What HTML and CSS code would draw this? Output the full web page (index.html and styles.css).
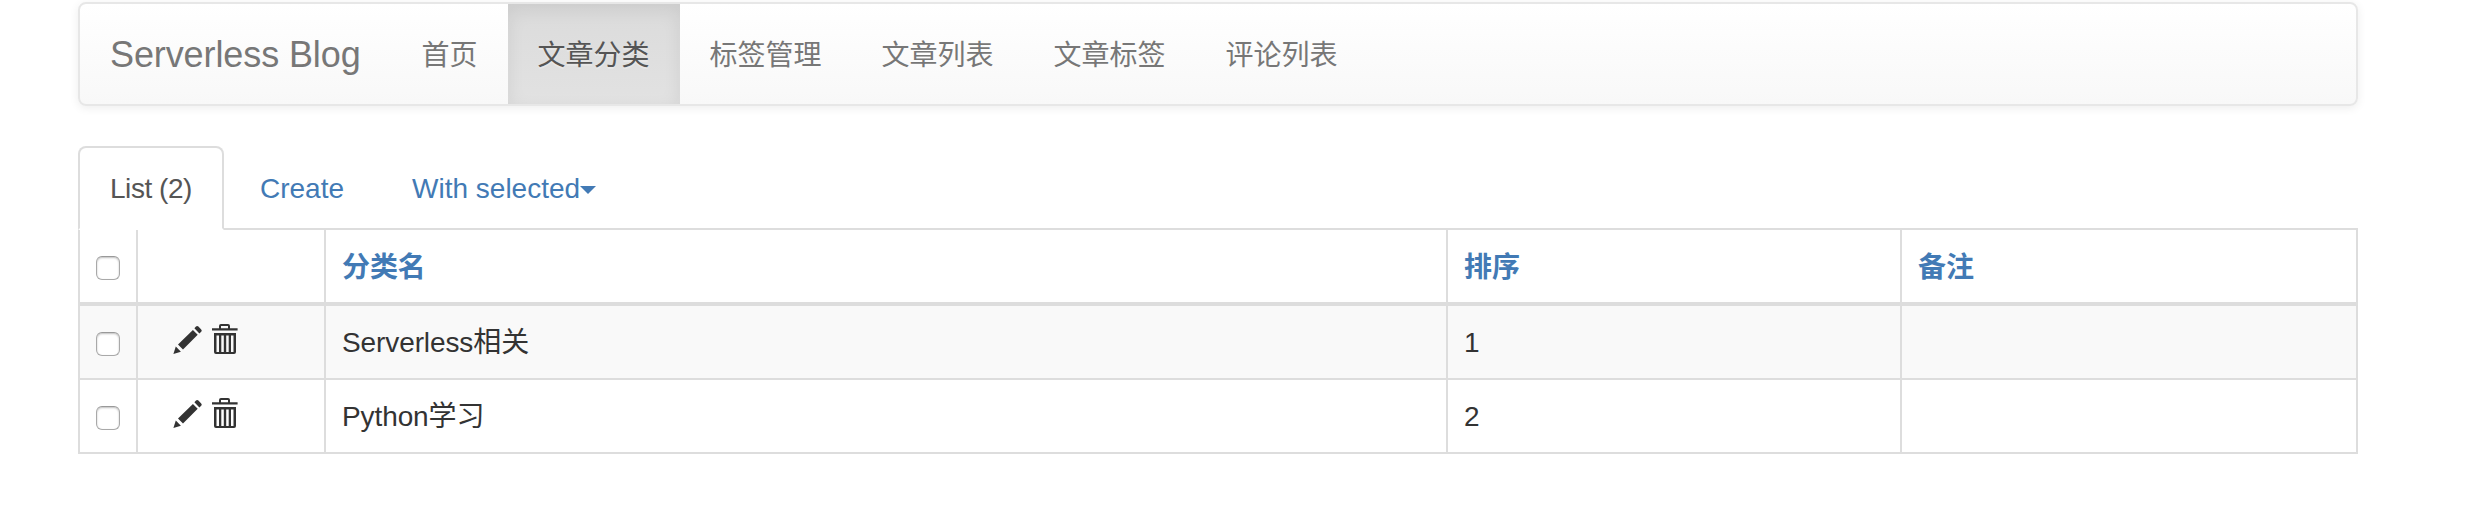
FILE: index.html
```html
<!DOCTYPE html>
<html lang="zh-CN">
<head>
<meta charset="utf-8">
<title>Serverless Blog</title>
<link rel="stylesheet" href="styles.css">
</head>
<body>
<svg class="defs" aria-hidden="true">
  <symbol id="pencil" viewBox="0 0 32 34">
    <path d="M1.4 32 3.8 24.6 8.9 29.7ZM6 22.6 20.9 7.9 25.7 12.7 11 27.5ZM22.4 6.2 24 4.6Q25.2 3.4 26.4 4.6L29.2 7.4Q30.4 8.6 29.2 9.8L27.4 11.4Z"/>
  </symbol>
  <symbol id="trash" viewBox="0 0 28 34">
    <path d="M1 6.2H8V4Q8 2 10 2H17Q19 2 19 4V6.2H26.6V8.6H1ZM10 6.2H17V4H10Z" fill-rule="evenodd"/>
    <path d="M3 11H25V30Q25 32 23 32H5Q3 32 3 30ZM5.5 13.4V30H8V13.4ZM10.3 13.4V30H12.8V13.4ZM15.2 13.4V30H17.7V13.4ZM20 13.4V30H22.5V13.4Z" fill-rule="evenodd"/>
  </symbol>
</svg>
<div class="container">
  <nav class="navbar">
    <a class="brand">Serverless Blog</a>
    <a class="nav-link">首页</a>
    <a class="nav-link active">文章分类</a>
    <a class="nav-link">标签管理</a>
    <a class="nav-link">文章列表</a>
    <a class="nav-link">文章标签</a>
    <a class="nav-link">评论列表</a>
  </nav>
  <div class="tabs">
    <a class="tab active">List (2)</a>
    <a class="tab">Create</a>
    <a class="tab">With selected<b class="caret"></b></a>
  </div>
  <table class="list">
    <colgroup><col class="c-check"><col class="c-actions"><col class="c-name"><col class="c-order"><col class="c-note"></colgroup>
    <thead>
      <tr><th class="tools"><input type="checkbox" class="check"></th><th></th><th>分类名</th><th>排序</th><th>备注</th></tr>
    </thead>
    <tbody>
      <tr>
        <td class="tools"><input type="checkbox" class="check"></td>
        <td class="tools"><div class="actions"><svg class="pencil"><use href="#pencil"/></svg><svg class="trash"><use href="#trash"/></svg></div></td>
        <td>Serverless相关</td><td>1</td><td></td>
      </tr>
      <tr>
        <td class="tools"><input type="checkbox" class="check"></td>
        <td class="tools"><div class="actions"><svg class="pencil"><use href="#pencil"/></svg><svg class="trash"><use href="#trash"/></svg></div></td>
        <td>Python学习</td><td>2</td><td></td>
      </tr>
    </tbody>
  </table>
</div>
</body>
</html>
```
FILE: styles.css
```css
* { box-sizing: border-box; }
body {
  margin: 0;
  background: #fff;
  color: #333;
  font: 28px/40px "Liberation Sans", "Noto Sans CJK SC", sans-serif;
}
.defs { display: none; }
.container { width: 2280px; margin-left: 78px; padding-top: 2px; }
.navbar {
  display: flex;
  height: 104px;
  margin-bottom: 40px;
  border: 2px solid #e7e7e7;
  border-radius: 8px;
  background: linear-gradient(#fff, #f8f8f8);
  box-shadow: inset 0 2px 0 rgba(255,255,255,.15), 0 2px 10px rgba(0,0,0,.075);
  color: #777;
  text-shadow: 0 2px 0 rgba(255,255,255,.25);
}
.brand { width: 312px; padding: 31px 30px 29px; font-size: 36px; letter-spacing: -.1px; white-space: nowrap; }
.nav-link { padding: 32px 30.5px 28px 29.5px; }
.nav-link.active {
  color: #555;
  background: linear-gradient(#dbdbdb, #e2e2e2);
  box-shadow: inset 0 6px 18px rgba(0,0,0,.075);
}
.tabs { display: flex; gap: 4px; height: 84px; border-bottom: 2px solid #ddd; }
.tab {
  display: flex;
  align-items: center;
  height: 84px;
  padding: 2px 30px 0;
  border: 2px solid transparent;
  border-radius: 8px 8px 0 0;
  color: #427ab5;
}
.tab.active {
  width: 146px;
  color: #555;
  background: #fff;
  border-color: #ddd #ddd transparent;
  letter-spacing: -.45px;
  white-space: nowrap;
}
.caret { border-top: 8px solid; border-left: 8px solid transparent; border-right: 8px solid transparent; margin-top: 2px; }
.list {
  width: 2280px;
  table-layout: fixed;
  border-collapse: separate;
  border-spacing: 0;
  border-right: 2px solid #ddd;
}
.c-check { width: 58px; }
.c-actions { width: 188px; }
.c-name { width: 1122px; }
.c-order { width: 454px; }
.c-note { width: 456px; }
th, td {
  height: 74px;
  padding: 17px 16px 15px;
  border: solid #ddd;
  border-width: 0 0 2px 2px;
  text-align: left;
  vertical-align: top;
  letter-spacing: -.1px;
}
th { height: 76px; padding: 18px 16px 14px; border-bottom-width: 4px; color: #427ab5; }
.tools { padding: 16px; }
tbody tr:first-child td { background: #f9f9f9; }
.check {
  appearance: none;
  display: block;
  width: 24px;
  height: 24px;
  margin: 10px 0 0;
  border: 1px solid #a9a9a9;
  border-top-color: #999;
  border-radius: 6px;
  background: #fff;
  box-shadow: inset 0 1px 2px rgba(0,0,0,.25);
}
.actions { display: flex; gap: 7px; padding-left: 18px; fill: #333; }
.pencil { width: 32px; height: 34px; }
.trash { width: 28px; height: 34px; }
```
